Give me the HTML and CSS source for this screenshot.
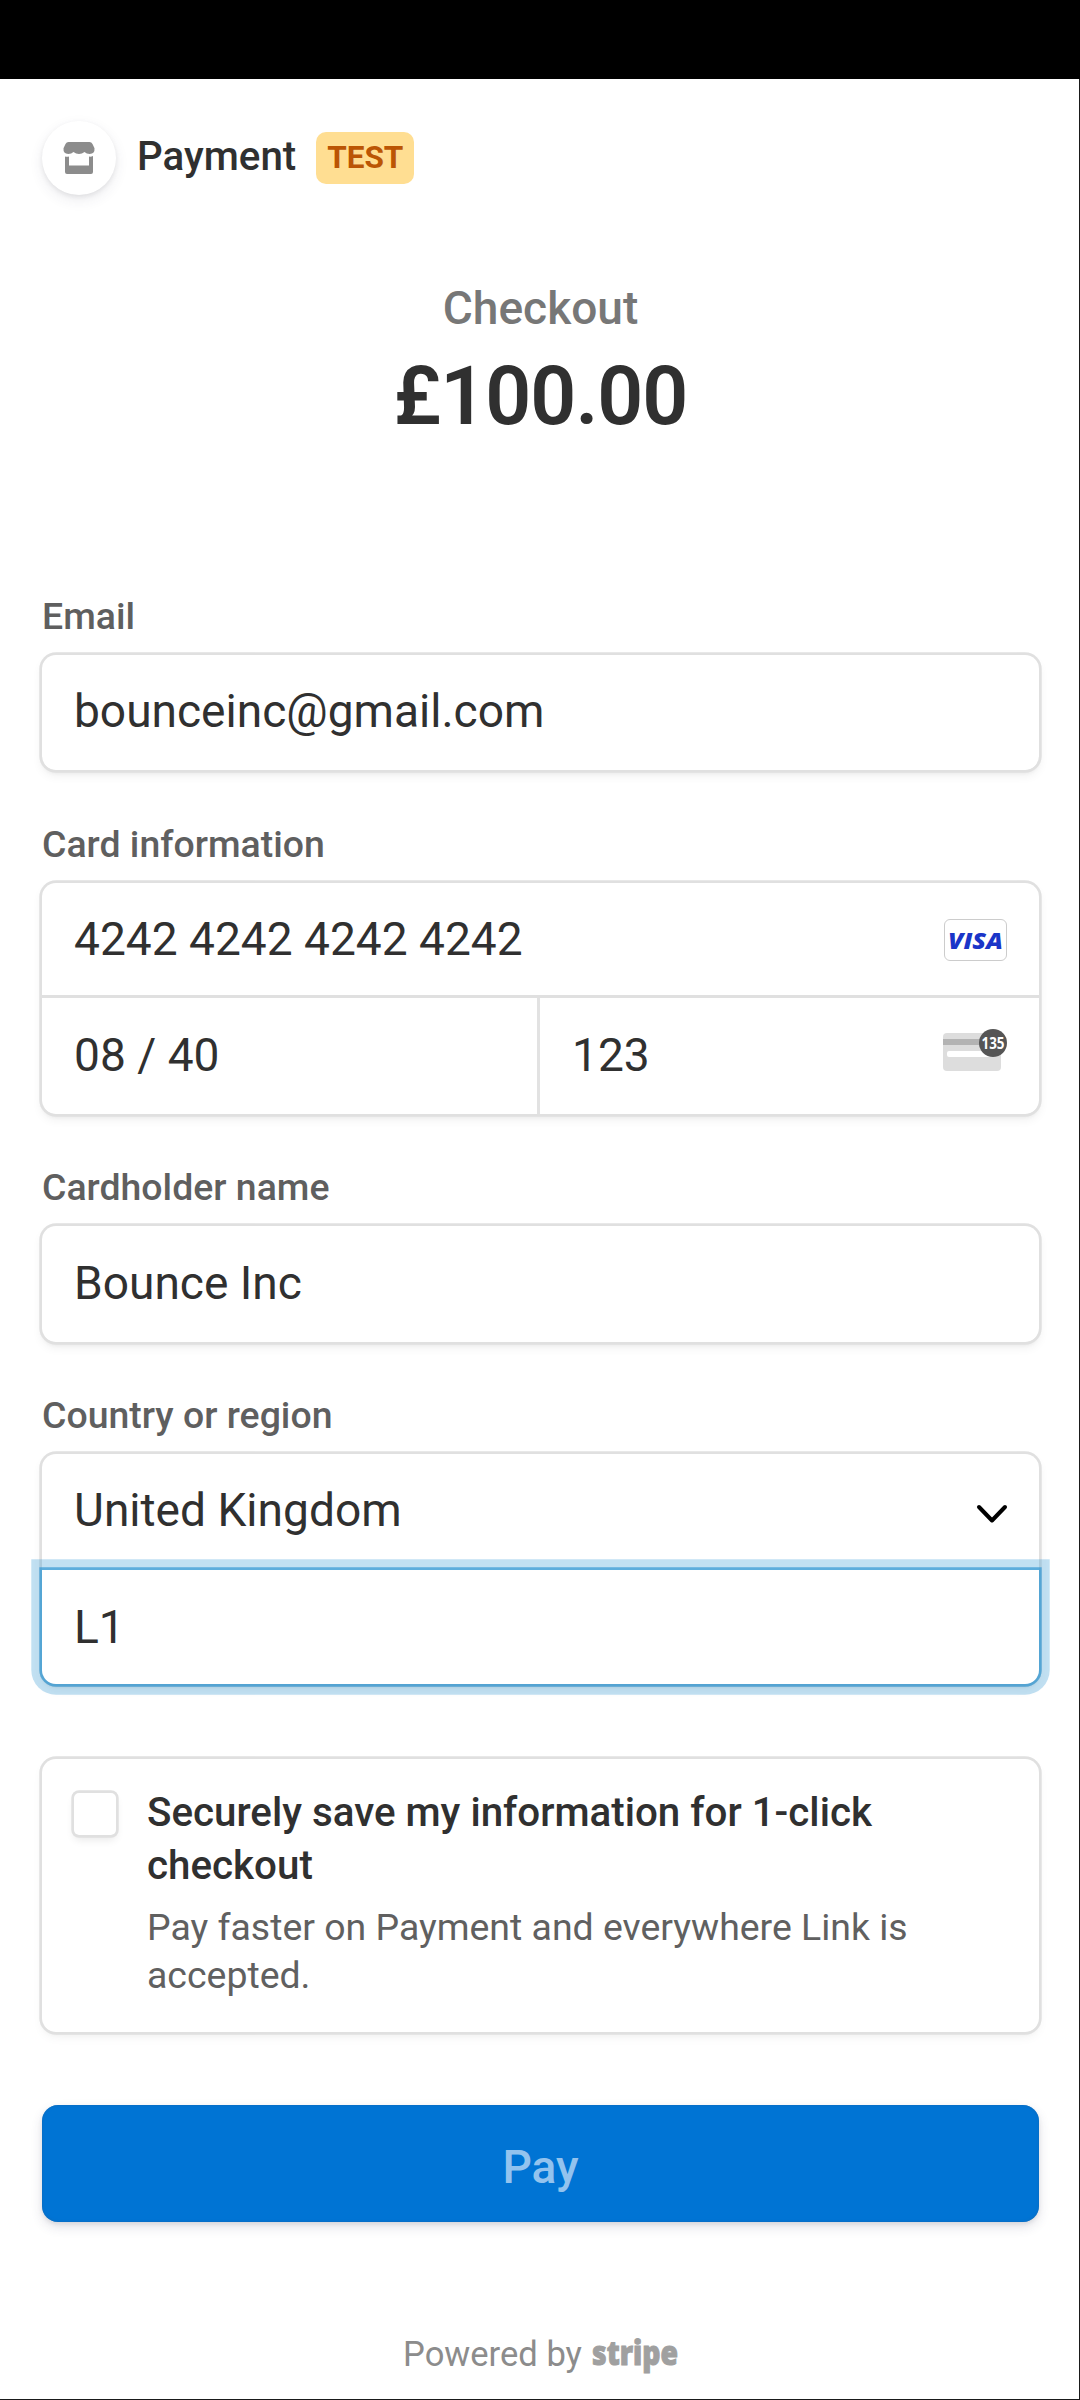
FILE: index.html
```html
<!DOCTYPE html>
<html lang="en">
<head>
<meta charset="utf-8">
<title>Checkout</title>
<link rel="stylesheet" href="styles.css">
</head>
<body>
<div class="status-bar"></div>
<main class="page">
  <header class="merchant">
    <span class="merchant-icon">
      <svg width="32" height="32" viewBox="0 0 32 32" fill="#8c8c8c">
        <path d="M5.500 0H26.500Q28.500 0 29.500 2L31.500 6.300Q32 12 26.700 12Q23.500 12 21.500 10Q19 12 16 12Q13 12 10.500 10Q8.500 12 5.300 12Q0 12 .5 6.300L2.500 2Q3.500 0 5.500 0Z"/>
        <path d="M2 14.500Q4 15 6 14.500V23.500H26V14.500Q28 15 30 14V30Q30 32 28 32H4Q2 32 2 30Z"/>
      </svg>
    </span>
    <span class="merchant-name">Payment</span>
    <span class="badge">TEST</span>
  </header>

  <section class="summary">
    <div class="summary-title">Checkout</div>
    <div class="summary-amount">£100.00</div>
  </section>

  <form class="form">
    <div class="label">Email</div>
    <div class="group">
      <div class="cell">bounceinc@gmail.com</div>
    </div>

    <div class="label label-card">Card information</div>
    <div class="group group-card">
      <div class="cell cell-number"><span>4242 4242 4242 4242</span>
        <svg class="visa" width="63" height="42" viewBox="0 0 63 42">
          <rect x=".5" y=".5" width="62" height="41" rx="5.500" fill="#fff" stroke="#ccc"/>
          <text class="visa-text" x="4" y="29.500" textLength="55" lengthAdjust="spacingAndGlyphs">VISA</text>
        </svg>
      </div>
      <div class="split">
        <div class="cell cell-expiry">08 / 40</div>
        <div class="cell cell-cvc"><span>123</span>
          <svg class="cvc" width="64" height="42" viewBox="0 0 64 42">
            <rect y="4" width="58" height="38" rx="4" fill="#ddd"/>
            <rect y="10" width="58" height="6" fill="#b3b3b3"/>
            <rect x="4" y="22" width="50" height="6" rx="2" fill="#fff"/>
            <circle cx="50" cy="14" r="14" fill="#555"/>
            <text class="cvc-text" x="38.500" y="20" textLength="23" lengthAdjust="spacingAndGlyphs">135</text>
          </svg>
        </div>
      </div>
    </div>

    <div class="label">Cardholder name</div>
    <div class="group group-name">
      <div class="cell">Bounce Inc</div>
    </div>

    <div class="label">Country or region</div>
    <div class="group group-country">
      <div class="cell cell-country"><span>United Kingdom</span>
        <svg class="chevron" width="30" height="18" viewBox="0 0 30 18" fill="none" stroke="#000" stroke-width="4" stroke-linecap="round" stroke-linejoin="round"><path d="M2 2L15 15.500L28 2"/></svg>
      </div>
      <div class="cell cell-postcode">L1</div>
    </div>

    <div class="save">
      <span class="checkbox"></span>
      <div class="save-copy">
        <div class="save-title">Securely save my information for 1-click checkout</div>
        <div class="save-note">Pay faster on Payment and everywhere Link is accepted.</div>
      </div>
    </div>

    <button class="pay" type="button"><span>Pay</span></button>
  </form>

  <footer class="footer">
    <span>Powered by</span>
    <svg width="87" height="52" viewBox="0 0 87 52"><text class="stripe-text" x="1" y="36" textLength="86" lengthAdjust="spacingAndGlyphs">stripe</text></svg>
  </footer>
</main>
</body>
</html>
```
FILE: styles.css
```css
* { box-sizing: border-box; }

body {
  margin: 0;
  width: 1080px;
  height: 2400px;
  overflow: hidden;
  background: #fff;
  color: #303030;
  font-family: Roboto, "Liberation Sans", sans-serif;
}

svg { overflow: visible; }

.status-bar { height: 79px; background: #000; }

.page {
  height: 2321px;
  padding: 42px 40px 0 42px;
  border-right: 1px solid #1a1a1a;
  border-bottom: 1px solid #1a1a1a;
}

.merchant { display: flex; align-items: center; height: 74px; }

.merchant-icon {
  display: flex;
  align-items: center;
  justify-content: center;
  width: 74px;
  height: 74px;
  border-radius: 50%;
  box-shadow: 0 5px 14px rgba(50, 50, 93, .09), 0 2px 5px rgba(0, 0, 0, .08);
}

.merchant-name {
  margin: 0 20px 2px 21px;
  font-size: 40.32px;
  font-weight: 500;
  line-height: 48px;
}

.badge {
  width: 98px;
  height: 52px;
  border-radius: 10px;
  background: #ffde92;
  color: #bb5504;
  font-size: 31.5px;
  font-weight: 700;
  line-height: 51px;
  text-align: center;
}

.summary { margin-top: 85px; height: 315px; text-align: center; }
.summary-title { color: #777; font-size: 46.08px; font-weight: 500; line-height: 56px; }
.summary-amount {
  margin-top: 15px;
  font-size: 80.64px;
  font-weight: 600;
  line-height: 92px;
  letter-spacing: -1px;
}

.form { width: 997px; }

.label {
  margin: 52px 0 16px;
  height: 44px;
  color: #5f5f5f;
  font-size: 37.44px;
  font-weight: 500;
  line-height: 43px;
}
.label:first-child { margin-top: 0; }
.label-card { margin-top: 53px; }

.group {
  height: 115px;
  border-radius: 14px;
  font-size: 46.08px;
  box-shadow: 0 0 0 2.7px #e0e0e0, 0 5px 11px rgba(0, 0, 0, .07), 0 3px 4px rgba(0, 0, 0, .05);
}
.group-card { height: 231px; }
.group-name { height: 116px; }
.group-country { height: 230px; }

.cell {
  display: flex;
  align-items: center;
  justify-content: space-between;
  height: 100%;
  padding: 0 32px 3px;
}
.cell-number { height: 115px; padding-bottom: 0; border-bottom: 3px solid #e0e0e0; }
.split { display: grid; grid-template-columns: 498px 1fr; height: 116px; }
.cell-expiry { border-right: 3px solid #e2e2e2; }
.visa { margin-top: 2px; }
.visa-text { font: italic 800 23px "Open Sans", sans-serif; fill: #1a35c8; }
.cvc { margin-bottom: 10px; }
.cvc-text { font: 700 16px "Open Sans", sans-serif; fill: #fff; }

.cell-country { height: 116px; padding-bottom: 4px; }
.chevron { margin-top: 8px; }
.cell-postcode {
  height: 114px;
  padding-bottom: 1px;
  border-radius: 0 0 14px 14px;
  background: #fff;
  box-shadow: 0 0 0 2.7px rgba(50, 151, 211, .7), 0 2px 3px rgba(0, 0, 0, .07), 0 0 0 10.7px rgba(50, 151, 211, .3);
}

.save {
  display: flex;
  align-items: flex-start;
  gap: 31px;
  height: 273px;
  margin-top: 75px;
  padding: 27px 32px 0;
  border-radius: 14px;
  box-shadow: 0 0 0 2.7px #e0e0e0, 0 5px 11px rgba(0, 0, 0, .05), 0 3px 4px rgba(0, 0, 0, .03);
}
.checkbox {
  flex: none;
  width: 42px;
  height: 42px;
  margin-top: 7px;
  border-radius: 5px;
  box-shadow: 0 0 0 2.7px #e0e0e0, 0 5px 8px rgba(0, 0, 0, .09);
}
.save-title { font-size: 40.32px; font-weight: 500; line-height: 53px; }
.save-note { margin-top: 11px; color: #606060; font-size: 37.44px; line-height: 48px; }

.pay {
  display: block;
  width: 100%;
  height: 117px;
  margin-top: 73px;
  padding: 6px 0 0;
  border: 0;
  border-radius: 16px;
  background: #0074d4;
  color: #93c3ee;
  font: 500 46.08px Roboto, sans-serif;
  box-shadow: inset 0 0 3px #1068b5, 0 5px 12px rgba(50, 50, 93, .14), 0 2px 4px rgba(0, 0, 0, .08);
}

.footer {
  display: flex;
  justify-content: center;
  align-items: center;
  gap: 9px;
  margin-top: 107px;
  color: #8c8c8c;
  font-size: 34.56px;
  line-height: 44px;
}
.footer span { margin-bottom: 2px; }
.stripe-text { font: 800 34px "Open Sans", sans-serif; fill: #a0a0a0; stroke: #a0a0a0; stroke-width: 1px; }
```
